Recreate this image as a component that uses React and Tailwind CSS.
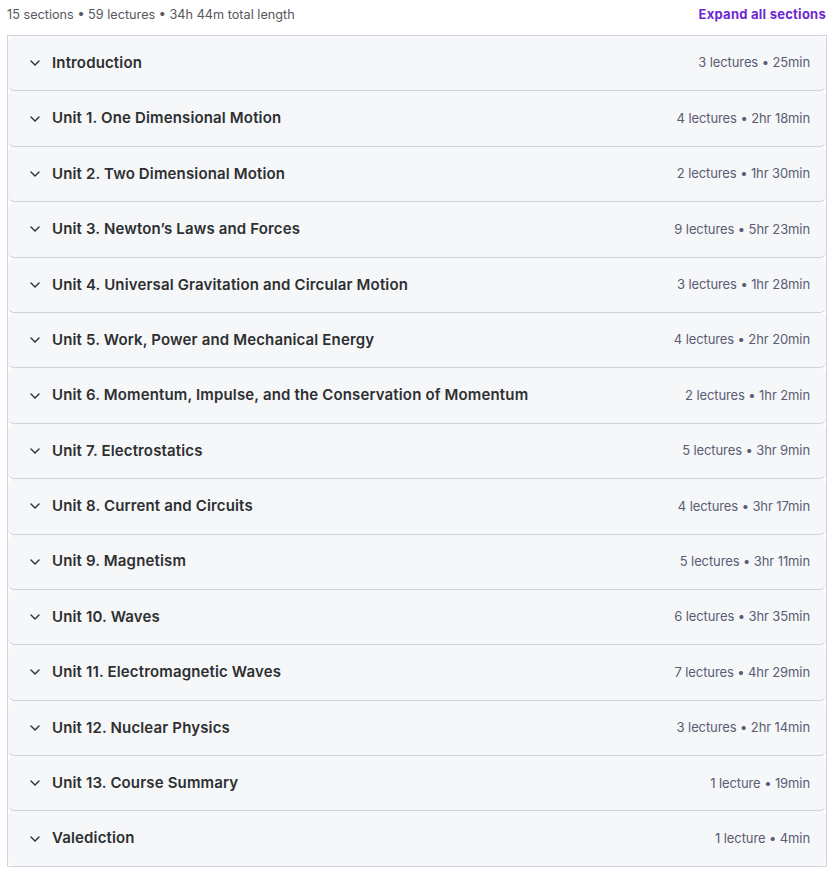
const sections = [
  ['Introduction', '3 lectures • 25min'],
  ['Unit 1. One Dimensional Motion', '4 lectures • 2hr 18min'],
  ['Unit 2. Two Dimensional Motion', '2 lectures • 1hr 30min'],
  ['Unit 3. Newton’s Laws and Forces', '9 lectures • 5hr 23min'],
  ['Unit 4. Universal Gravitation and Circular Motion', '3 lectures • 1hr 28min'],
  ['Unit 5. Work, Power and Mechanical Energy', '4 lectures • 2hr 20min'],
  ['Unit 6. Momentum, Impulse, and the Conservation of Momentum', '2 lectures • 1hr 2min'],
  ['Unit 7. Electrostatics', '5 lectures • 3hr 9min'],
  ['Unit 8. Current and Circuits', '4 lectures • 3hr 17min'],
  ['Unit 9. Magnetism', '5 lectures • 3hr 11min'],
  ['Unit 10. Waves', '6 lectures • 3hr 35min'],
  ['Unit 11. Electromagnetic Waves', '7 lectures • 4hr 29min'],
  ['Unit 12. Nuclear Physics', '3 lectures • 2hr 14min'],
  ['Unit 13. Course Summary', '1 lecture • 19min'],
  ['Valediction', '1 lecture • 4min'],
]

function Chevron() {
  return (
    <svg width="10" height="6" viewBox="0 0 10 6" fill="none" className="shrink-0">
      <path d="M1 1l4 4 4-4" stroke="#2d2f31" strokeWidth="1.4" strokeLinecap="round" strokeLinejoin="round" />
    </svg>
  )
}

export default function App() {
  return (
    <div className="w-[832px] bg-white font-['Inter',sans-serif] text-[#2d2f31]">
      <div className="flex items-center justify-between pl-[7px] pr-[6px] h-[28px] pt-[1px]">
        <span className="text-[12.7px] text-[#56585c]">
          15 sections • 59 lectures • 34h 44m total length
        </span>
        <button className="text-[13px] font-bold tracking-[0.25px] text-[#6d28d2]">Expand all sections</button>
      </div>
      <div className="ml-[7px] mt-[7px] w-[820px] border border-[#d1d2e0]">
        {sections.map(([title, info], i) => (
          <div
            key={title}
            className={
              i === sections.length - 1
                ? 'flex h-[54.4px] items-center rounded-md bg-[#f6f7f9] pl-[22px] pr-[16px]'
                : 'flex h-[55.4px] items-center rounded-md border-b border-[#d1d2e0] bg-[#f6f7f9] pl-[22px] pr-[16px]'
            }
          >
            <Chevron />
            <span className="ml-[12px] text-[15px] font-semibold tracking-[0.15px]">{title}</span>
            <span className="ml-auto text-[13px] tracking-[-0.1px] text-[#595c73]">{info}</span>
          </div>
        ))}
      </div>
    </div>
  )
}
